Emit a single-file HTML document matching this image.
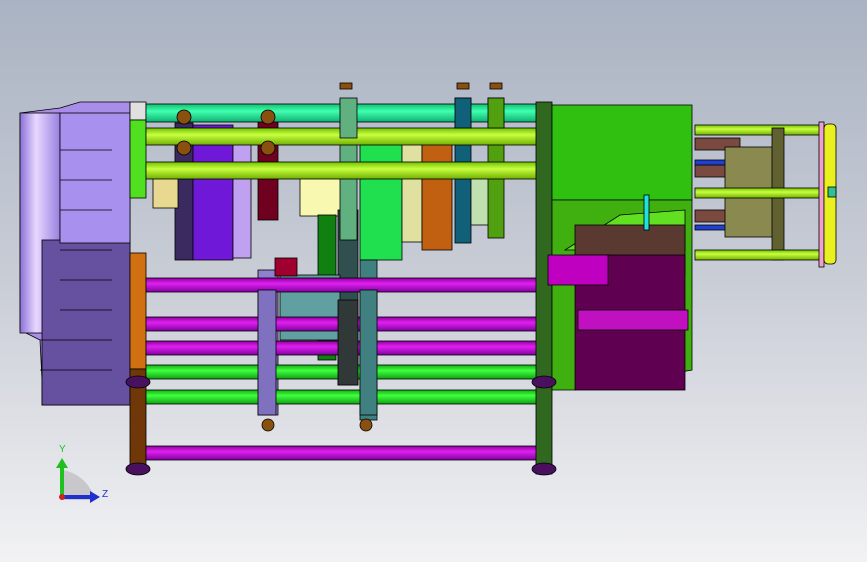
<!DOCTYPE html>
<html><head><meta charset="utf-8"><style>
html,body{margin:0;padding:0;width:867px;height:562px;overflow:hidden}
body{background:linear-gradient(#aab3c3 0%,#c9cdd6 50%,#f2f2f4 100%)}
svg{position:absolute;left:0;top:0}
text{font-family:"Liberation Sans",sans-serif}
</style></head><body>
<svg width="867" height="562" viewBox="0 0 867 562" stroke="#000" stroke-width="0.8">
<defs>
<linearGradient id="vio" x1="0" x2="1"><stop offset="0" stop-color="#8a70d8"/><stop offset="0.4" stop-color="#e8d8ff"/><stop offset="1" stop-color="#9880e0"/></linearGradient>
<linearGradient id="rodM" x1="0" y1="0" x2="0" y2="1"><stop offset="0" stop-color="#9000a0"/><stop offset="0.4" stop-color="#e020f0"/><stop offset="1" stop-color="#8000a0"/></linearGradient>
<linearGradient id="rodG" x1="0" y1="0" x2="0" y2="1"><stop offset="0" stop-color="#10b010"/><stop offset="0.4" stop-color="#40ff40"/><stop offset="1" stop-color="#10a010"/></linearGradient>
<linearGradient id="rodY" x1="0" y1="0" x2="0" y2="1"><stop offset="0" stop-color="#70c000"/><stop offset="0.4" stop-color="#c8ff40"/><stop offset="1" stop-color="#70b000"/></linearGradient>
<linearGradient id="rodC" x1="0" y1="0" x2="0" y2="1"><stop offset="0" stop-color="#10c070"/><stop offset="0.4" stop-color="#40ffb0"/><stop offset="1" stop-color="#10b070"/></linearGradient>
</defs>
<!-- left housing -->
<polygon points="20,113 60,108 80,102 130,102 130,405 42,405 42,380 40,340 20,330" fill="#a88ee8"/>
<rect x="20" y="113" width="40" height="220" fill="url(#vio)"/>
<rect x="42" y="240" width="88" height="165" fill="#6650a0"/>
<rect x="60" y="113" width="70" height="130" fill="#a890ee"/>
<g stroke="#000"><line x1="60" y1="150" x2="112" y2="150"/><line x1="60" y1="180" x2="112" y2="180"/><line x1="60" y1="210" x2="112" y2="210"/><line x1="60" y1="250" x2="112" y2="250"/><line x1="60" y1="280" x2="112" y2="280"/><line x1="60" y1="310" x2="112" y2="310"/><line x1="40" y1="340" x2="112" y2="340"/><line x1="40" y1="370" x2="112" y2="370"/></g>
<rect x="130" y="102" width="16" height="18" fill="#e0e0e0"/>
<rect x="130" y="120" width="16" height="78" fill="#50e020"/>
<rect x="130" y="253" width="16" height="116" fill="#d07010"/>
<rect x="130" y="369" width="16" height="100" fill="#703808"/>
<!-- center parts -->
<rect x="175" y="123" width="18" height="137" fill="#3a2a60"/>
<rect x="193" y="125" width="40" height="135" fill="#7018d8"/>
<rect x="233" y="130" width="18" height="128" fill="#c0a0f0"/>
<rect x="153" y="178" width="25" height="30" fill="#e8d890"/>
<rect x="258" y="112" width="20" height="108" fill="#700020"/>
<rect x="300" y="178" width="45" height="38" fill="#f8f8b0"/>
<rect x="318" y="215" width="18" height="145" fill="#108010"/>
<rect x="338" y="210" width="20" height="175" fill="#305050"/>
<rect x="340" y="100" width="17" height="140" fill="#60b080"/>
<rect x="360" y="130" width="42" height="130" fill="#20e050"/>
<rect x="402" y="132" width="20" height="110" fill="#e0e0a0"/>
<rect x="422" y="130" width="30" height="120" fill="#c06010"/>
<rect x="455" y="98" width="16" height="145" fill="#10607a"/>
<rect x="471" y="170" width="20" height="55" fill="#c0e0b0"/>
<rect x="488" y="98" width="16" height="140" fill="#50a010"/>
<rect x="258" y="270" width="20" height="145" fill="#9080d0"/>
<rect x="280" y="275" width="60" height="65" fill="#60a0a0"/>
<rect x="360" y="260" width="17" height="160" fill="#408080"/>
<rect x="275" y="258" width="22" height="18" fill="#a00030"/>
<!-- rods -->
<rect x="146" y="104" width="392" height="18" fill="url(#rodC)"/>
<rect x="146" y="128" width="392" height="17" fill="url(#rodY)"/>
<rect x="146" y="162" width="392" height="17" fill="url(#rodY)"/>
<rect x="146" y="278" width="392" height="14" fill="url(#rodM)"/>
<rect x="146" y="317" width="392" height="14" fill="url(#rodM)"/>
<rect x="146" y="341" width="392" height="14" fill="url(#rodM)"/>
<rect x="146" y="365" width="392" height="14" fill="url(#rodG)"/>
<rect x="146" y="390" width="392" height="14" fill="url(#rodG)"/>
<rect x="146" y="446" width="392" height="14" fill="url(#rodM)"/>
<!-- vertical posts over rods -->
<rect x="340" y="98" width="17" height="40" fill="#60b080"/>
<rect x="455" y="98" width="16" height="30" fill="#10607a"/>
<rect x="488" y="98" width="16" height="30" fill="#50a010"/>
<rect x="258" y="290" width="18" height="125" fill="#8070c0"/>
<rect x="360" y="290" width="17" height="125" fill="#408080"/>
<rect x="338" y="300" width="20" height="85" fill="#303838"/>
<!-- nuts -->
<g fill="#8a5010"><circle cx="184" cy="117" r="7"/><circle cx="184" cy="148" r="7"/><circle cx="268" cy="117" r="7"/><circle cx="268" cy="148" r="7"/><circle cx="268" cy="425" r="6"/><circle cx="366" cy="425" r="6"/><rect x="340" y="83" width="12" height="6"/><rect x="457" y="83" width="12" height="6"/><rect x="490" y="83" width="12" height="6"/></g>
<!-- right block -->
<rect x="536" y="102" width="16" height="372" fill="#306820"/>
<rect x="552" y="105" width="140" height="95" fill="#30c010"/>
<polygon points="552,200 692,200 692,370 575,390 552,390" fill="#40b010"/>
<polygon points="565,250 620,215 685,210 685,250" fill="#60e020"/>
<rect x="575" y="225" width="110" height="50" fill="#5a3a30"/>
<rect x="575" y="255" width="110" height="135" fill="#600050"/>
<rect x="548" y="255" width="60" height="30" fill="#c000c0"/>
<rect x="578" y="310" width="110" height="20" fill="#c010c0"/>
<rect x="644" y="195" width="5" height="35" fill="#20e0e0"/>
<!-- right assembly -->
<rect x="695" y="125" width="125" height="10" fill="url(#rodY)"/>
<rect x="695" y="138" width="45" height="12" fill="#7a4a40"/>
<rect x="695" y="165" width="45" height="12" fill="#7a4a40"/>
<rect x="695" y="210" width="45" height="12" fill="#7a4a40"/>
<rect x="695" y="160" width="45" height="5" fill="#2040d0"/>
<rect x="695" y="225" width="45" height="5" fill="#2040d0"/>
<rect x="725" y="147" width="50" height="90" fill="#8a8a50"/>
<rect x="772" y="128" width="12" height="132" fill="#606030"/>
<rect x="695" y="188" width="125" height="10" fill="url(#rodY)"/>
<rect x="695" y="250" width="125" height="10" fill="url(#rodY)"/>
<rect x="819" y="122" width="5" height="145" fill="#f0a0d0"/>
<rect x="824" y="124" width="12" height="140" fill="#e8f020" rx="4"/>
<rect x="828" y="187" width="8" height="10" fill="#30c090"/>
<!-- feet -->
<g fill="#4a1060"><ellipse cx="138" cy="382" rx="12" ry="6"/><ellipse cx="138" cy="469" rx="12" ry="6"/><ellipse cx="544" cy="382" rx="12" ry="6"/><ellipse cx="544" cy="469" rx="12" ry="6"/></g>
<!-- axis triad -->
<path d="M62 470 A40 40 0 0 1 95 500 L62 500 Z" fill="#c8c8cc" stroke="none"/>
<rect x="60" y="463" width="4" height="35" fill="#20c020" stroke="none"/>
<polygon points="56,468 62,458 68,468" fill="#20c020" stroke="none"/>
<rect x="62" y="495" width="30" height="4" fill="#2030d0" stroke="none"/>
<polygon points="90,491 100,497 90,503" fill="#2030d0" stroke="none"/>
<circle cx="62" cy="497" r="3" fill="#d02020" stroke="none"/>
<text x="59" y="452" font-size="10" fill="#20c020" stroke="none">Y</text>
<text x="102" y="497" font-size="10" fill="#2030d0" stroke="none">Z</text>
</svg>
</body></html>
